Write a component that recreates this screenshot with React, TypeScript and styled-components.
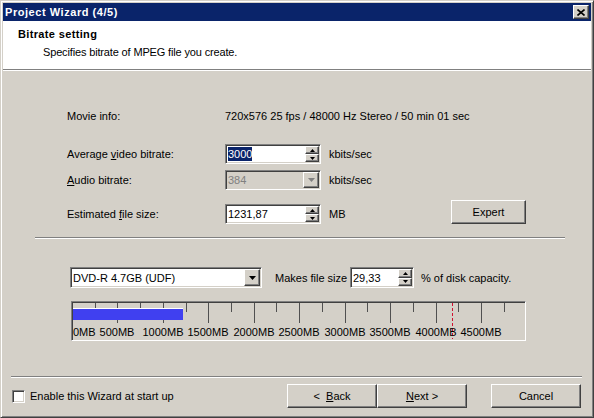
import React from 'react';
import styled, { createGlobalStyle, css } from 'styled-components';

const Face = '#d4d0c8';
const Shadow = '#808080';
const DarkShadow = '#404040';
const Highlight = '#ffffff';
const Navy = '#0a246a';

const GlobalStyle = createGlobalStyle`
  html, body {
    margin: 0;
    padding: 0;
    background: ${Face};
  }
  body {
    font: 11px 'Liberation Sans', Arial, sans-serif;
    color: #000;
  }
`;

const raised = css`
  border: 1px solid;
  border-color: ${Highlight} ${DarkShadow} ${DarkShadow} ${Highlight};
  box-shadow: inset -1px -1px ${Shadow}, inset 1px 1px ${Face};
`;

const sunken = css`
  border: 1px solid;
  border-color: ${Shadow} ${Highlight} ${Highlight} ${Shadow};
  box-shadow: inset 1px 1px ${DarkShadow}, inset -1px -1px ${Face};
`;

const Window = styled.div`
  box-sizing: border-box;
  width: 594px;
  height: 418px;
  padding: 2px;
  border: 1px solid;
  border-color: ${Face} ${DarkShadow} ${DarkShadow} ${Face};
  box-shadow: inset 1px 1px ${Highlight}, inset -1px -1px ${Shadow};
  background: ${Face};
  display: flex;
  flex-direction: column;
`;

const TitleBar = styled.div`
  height: 18px;
  flex-shrink: 0;
  padding: 0 2px 0 2px;
  display: flex;
  align-items: center;
  justify-content: space-between;
  background: ${Navy};
  color: #fff;
  font-weight: bold;
  letter-spacing: 0.55px;
`;

const CloseButton = styled.div`
  ${raised}
  box-sizing: border-box;
  width: 16px;
  height: 14px;
  background: ${Face};
  display: flex;
  align-items: center;
  justify-content: center;
`;

const Header = styled.div`
  height: 48px;
  flex-shrink: 0;
  box-sizing: border-box;
  padding: 7px 0 0 15px;
  background: #fff;
`;

const HeaderTitle = styled.div`
  font-weight: bold;
  line-height: 13px;
  letter-spacing: 0.35px;
`;

const HeaderText = styled.div`
  margin: 5px 0 0 25px;
  line-height: 13px;
  letter-spacing: -0.15px;
`;

const EtchedRule = styled.div`
  height: 0;
  flex-shrink: 0;
  border-top: 1px solid ${Shadow};
  border-bottom: 1px solid ${Highlight};
`;

const SectionRule = styled(EtchedRule)`
  width: 530px;
  margin: 13px 0 0 32px;
`;

const FooterRule = styled(EtchedRule)`
  margin: auto 9px 0 8px;
`;

const Body = styled.div`
  flex: 1;
  display: flex;
  flex-direction: column;
  padding-top: 38px;
`;

const FormRow = styled.div<{ $gap: number; $height: number; $bottom?: boolean }>`
  display: flex;
  align-items: ${p => (p.$bottom ? 'flex-end' : 'center')};
  height: ${p => p.$height}px;
  margin-top: ${p => p.$gap}px;
  padding-left: 64px;
`;

const FieldLabel = styled.div`
  width: 158px;
  height: 20px;
  flex-shrink: 0;
  line-height: 20px;
  white-space: nowrap;
`;

const Unit = styled.div`
  width: 62px;
  height: 20px;
  margin-left: 8px;
  line-height: 20px;
  white-space: nowrap;
`;

const Field = styled.div<{ $width: number; $height?: number; $disabled?: boolean }>`
  ${sunken}
  box-sizing: border-box;
  flex-shrink: 0;
  width: ${p => p.$width}px;
  height: ${p => p.$height ?? 20}px;
  padding: 1px;
  display: flex;
  background: ${p => (p.$disabled ? Face : '#fff')};
`;

const FieldText = styled.div<{ $disabled?: boolean }>`
  flex: 1;
  display: flex;
  align-items: center;
  padding-left: 1px;
  overflow: hidden;
  white-space: nowrap;
  color: ${p => (p.$disabled ? Shadow : '#000')};
`;

const Selected = styled.span`
  background: ${Navy};
  color: #fff;
  line-height: 14px;
`;

const SpinColumn = styled.div`
  width: 14px;
  display: flex;
  flex-direction: column;
`;

const SpinHalf = styled.div`
  ${raised}
  box-sizing: border-box;
  flex: 1;
  background: ${Face};
  display: flex;
  align-items: center;
  justify-content: center;
`;

const DropButton = styled.div`
  ${raised}
  box-sizing: border-box;
  width: 16px;
  background: ${Face};
  display: flex;
  align-items: center;
  justify-content: center;
`;

const Button = styled.div<{ $width?: number }>`
  ${raised}
  box-sizing: border-box;
  width: ${p => p.$width ?? 90}px;
  height: 24px;
  flex-shrink: 0;
  background: ${Face};
  line-height: 22px;
  text-align: center;
  white-space: pre;
`;

const ExpertButton = styled(Button)`
  margin-left: 60px;
`;

const DiskRow = styled.div`
  display: flex;
  align-items: center;
  height: 21px;
  margin-top: 28px;
  padding-left: 67px;
`;

const DiskLabel = styled.div<{ $width?: number; $gap: number }>`
  width: ${p => (p.$width ? `${p.$width}px` : 'auto')};
  margin-left: ${p => p.$gap}px;
  white-space: nowrap;
`;

const Ruler = styled.div`
  ${sunken}
  width: 455px;
  height: 40px;
  box-sizing: border-box;
  margin: 13px 0 0 68px;
  padding: 1px;
  svg {
    display: block;
  }
`;

const Footer = styled.div`
  height: 24px;
  margin: 6px 0 7px;
  padding: 0 10px 0 9px;
  display: flex;
  align-items: center;
`;

const CheckBox = styled.div`
  ${sunken}
  box-sizing: border-box;
  width: 13px;
  height: 13px;
  background: #fff;
`;

const CheckLabel = styled.div`
  margin-left: 5px;
  flex: 1;
`;

const CancelButton = styled(Button)`
  margin-left: 24px;
`;

function UpArrow({ color = '#000' }: { color?: string }) {
  return (
    <svg width="5" height="3" viewBox="0 0 5 3">
      <polygon points="2.5,0 5,3 0,3" fill={color} />
    </svg>
  );
}

function DownArrow({ color = '#000', w = 5, h = 3 }: { color?: string; w?: number; h?: number }) {
  return (
    <svg width={w} height={h} viewBox={`0 0 ${w} ${h}`}>
      <polygon points={`0,0 ${w},0 ${w / 2},${h}`} fill={color} />
    </svg>
  );
}

function Spin() {
  return (
    <SpinColumn>
      <SpinHalf><UpArrow /></SpinHalf>
      <SpinHalf><DownArrow /></SpinHalf>
    </SpinColumn>
  );
}

// 250MB per tick, 0.0908px per MB
const TICK = 22.72;
const labels = ['0MB', '500MB', '1000MB', '1500MB', '2000MB', '2500MB', '3000MB', '3500MB', '4000MB', '4500MB'];

function RulerChart() {
  const ticks = Array.from({ length: 19 }, (_, i) => i + 1);
  return (
    <svg width="451" height="36" viewBox="0 0 451 36">
      {ticks.map(k => (
        <line
          key={k}
          x1={Math.round(k * TICK - 1) + 0.5}
          x2={Math.round(k * TICK - 1) + 0.5}
          y1={0}
          y2={k % 2 === 0 ? 20 : 9}
          stroke="#505050"
          strokeWidth="1"
        />
      ))}
      <rect x="0" y="5" width="110" height="1" fill="#fff" />
      <rect x="0" y="6" width="110" height="11" fill="#4040f0" />
      <line x1="379.5" x2="379.5" y1="0" y2="36" stroke="#d01030" strokeWidth="1" strokeDasharray="3 2" />
      {labels.map((t, m) => (
        <text
          key={t}
          x={m === 0 ? 0 : Math.round(m * TICK * 2 - 1)}
          y="33"
          textAnchor={m === 0 ? 'start' : 'middle'}
          fontFamily="'Liberation Sans', Arial, sans-serif"
          fontSize="11"
          fill="#000"
        >
          {t}
        </text>
      ))}
    </svg>
  );
}

export default function App() {
  return (
    <>
      <GlobalStyle />
      <Window>
        <TitleBar>
          <span>Project Wizard (4/5)</span>
          <CloseButton>
            <svg width="8" height="7" viewBox="0 0 8 7">
              <path d="M0.5 0.5 L7.5 6.5 M7.5 0.5 L0.5 6.5" stroke="#000" strokeWidth="1.6" />
            </svg>
          </CloseButton>
        </TitleBar>
        <Header>
          <HeaderTitle>Bitrate setting</HeaderTitle>
          <HeaderText>Specifies bitrate of MPEG file you create.</HeaderText>
        </Header>
        <EtchedRule />
        <Body>
          <FormRow $gap={0} $height={13}>
            <FieldLabel>Movie info:</FieldLabel>
            <span>720x576 25 fps / 48000 Hz Stereo / 50 min 01 sec</span>
          </FormRow>
          <FormRow $gap={22} $height={20}>
            <FieldLabel>Average <u>v</u>ideo bitrate:</FieldLabel>
            <Field $width={96}>
              <FieldText><Selected>3000</Selected></FieldText>
              <Spin />
            </Field>
            <Unit>kbits/sec</Unit>
          </FormRow>
          <FormRow $gap={6} $height={20}>
            <FieldLabel><u>A</u>udio bitrate:</FieldLabel>
            <Field $width={96} $disabled>
              <FieldText $disabled>384</FieldText>
              <DropButton><DownArrow color={Shadow} w={7} h={4} /></DropButton>
            </Field>
            <Unit>kbits/sec</Unit>
          </FormRow>
          <FormRow $gap={10} $height={24} $bottom>
            <FieldLabel>Estimated <u>f</u>ile size:</FieldLabel>
            <Field $width={96}>
              <FieldText>1231,87</FieldText>
              <Spin />
            </Field>
            <Unit>MB</Unit>
            <ExpertButton $width={75}>Expert</ExpertButton>
          </FormRow>
          <SectionRule />
          <DiskRow>
            <Field $width={192} $height={21}>
              <FieldText>DVD-R 4.7GB (UDF)</FieldText>
              <DropButton><DownArrow w={7} h={4} /></DropButton>
            </Field>
            <DiskLabel $gap={13} $width={75}>Makes file size</DiskLabel>
            <Field $width={64} $height={21}>
              <FieldText>29,33</FieldText>
              <Spin />
            </Field>
            <DiskLabel $gap={7}>% of disk capacity.</DiskLabel>
          </DiskRow>
          <Ruler>
            <RulerChart />
          </Ruler>
          <FooterRule />
          <Footer>
            <CheckBox />
            <CheckLabel>Enable this Wizard at start up</CheckLabel>
            <Button>{'<  '}<u>B</u>ack</Button>
            <Button><u>N</u>ext {'>'}</Button>
            <CancelButton>Cancel</CancelButton>
          </Footer>
        </Body>
      </Window>
    </>
  );
}
